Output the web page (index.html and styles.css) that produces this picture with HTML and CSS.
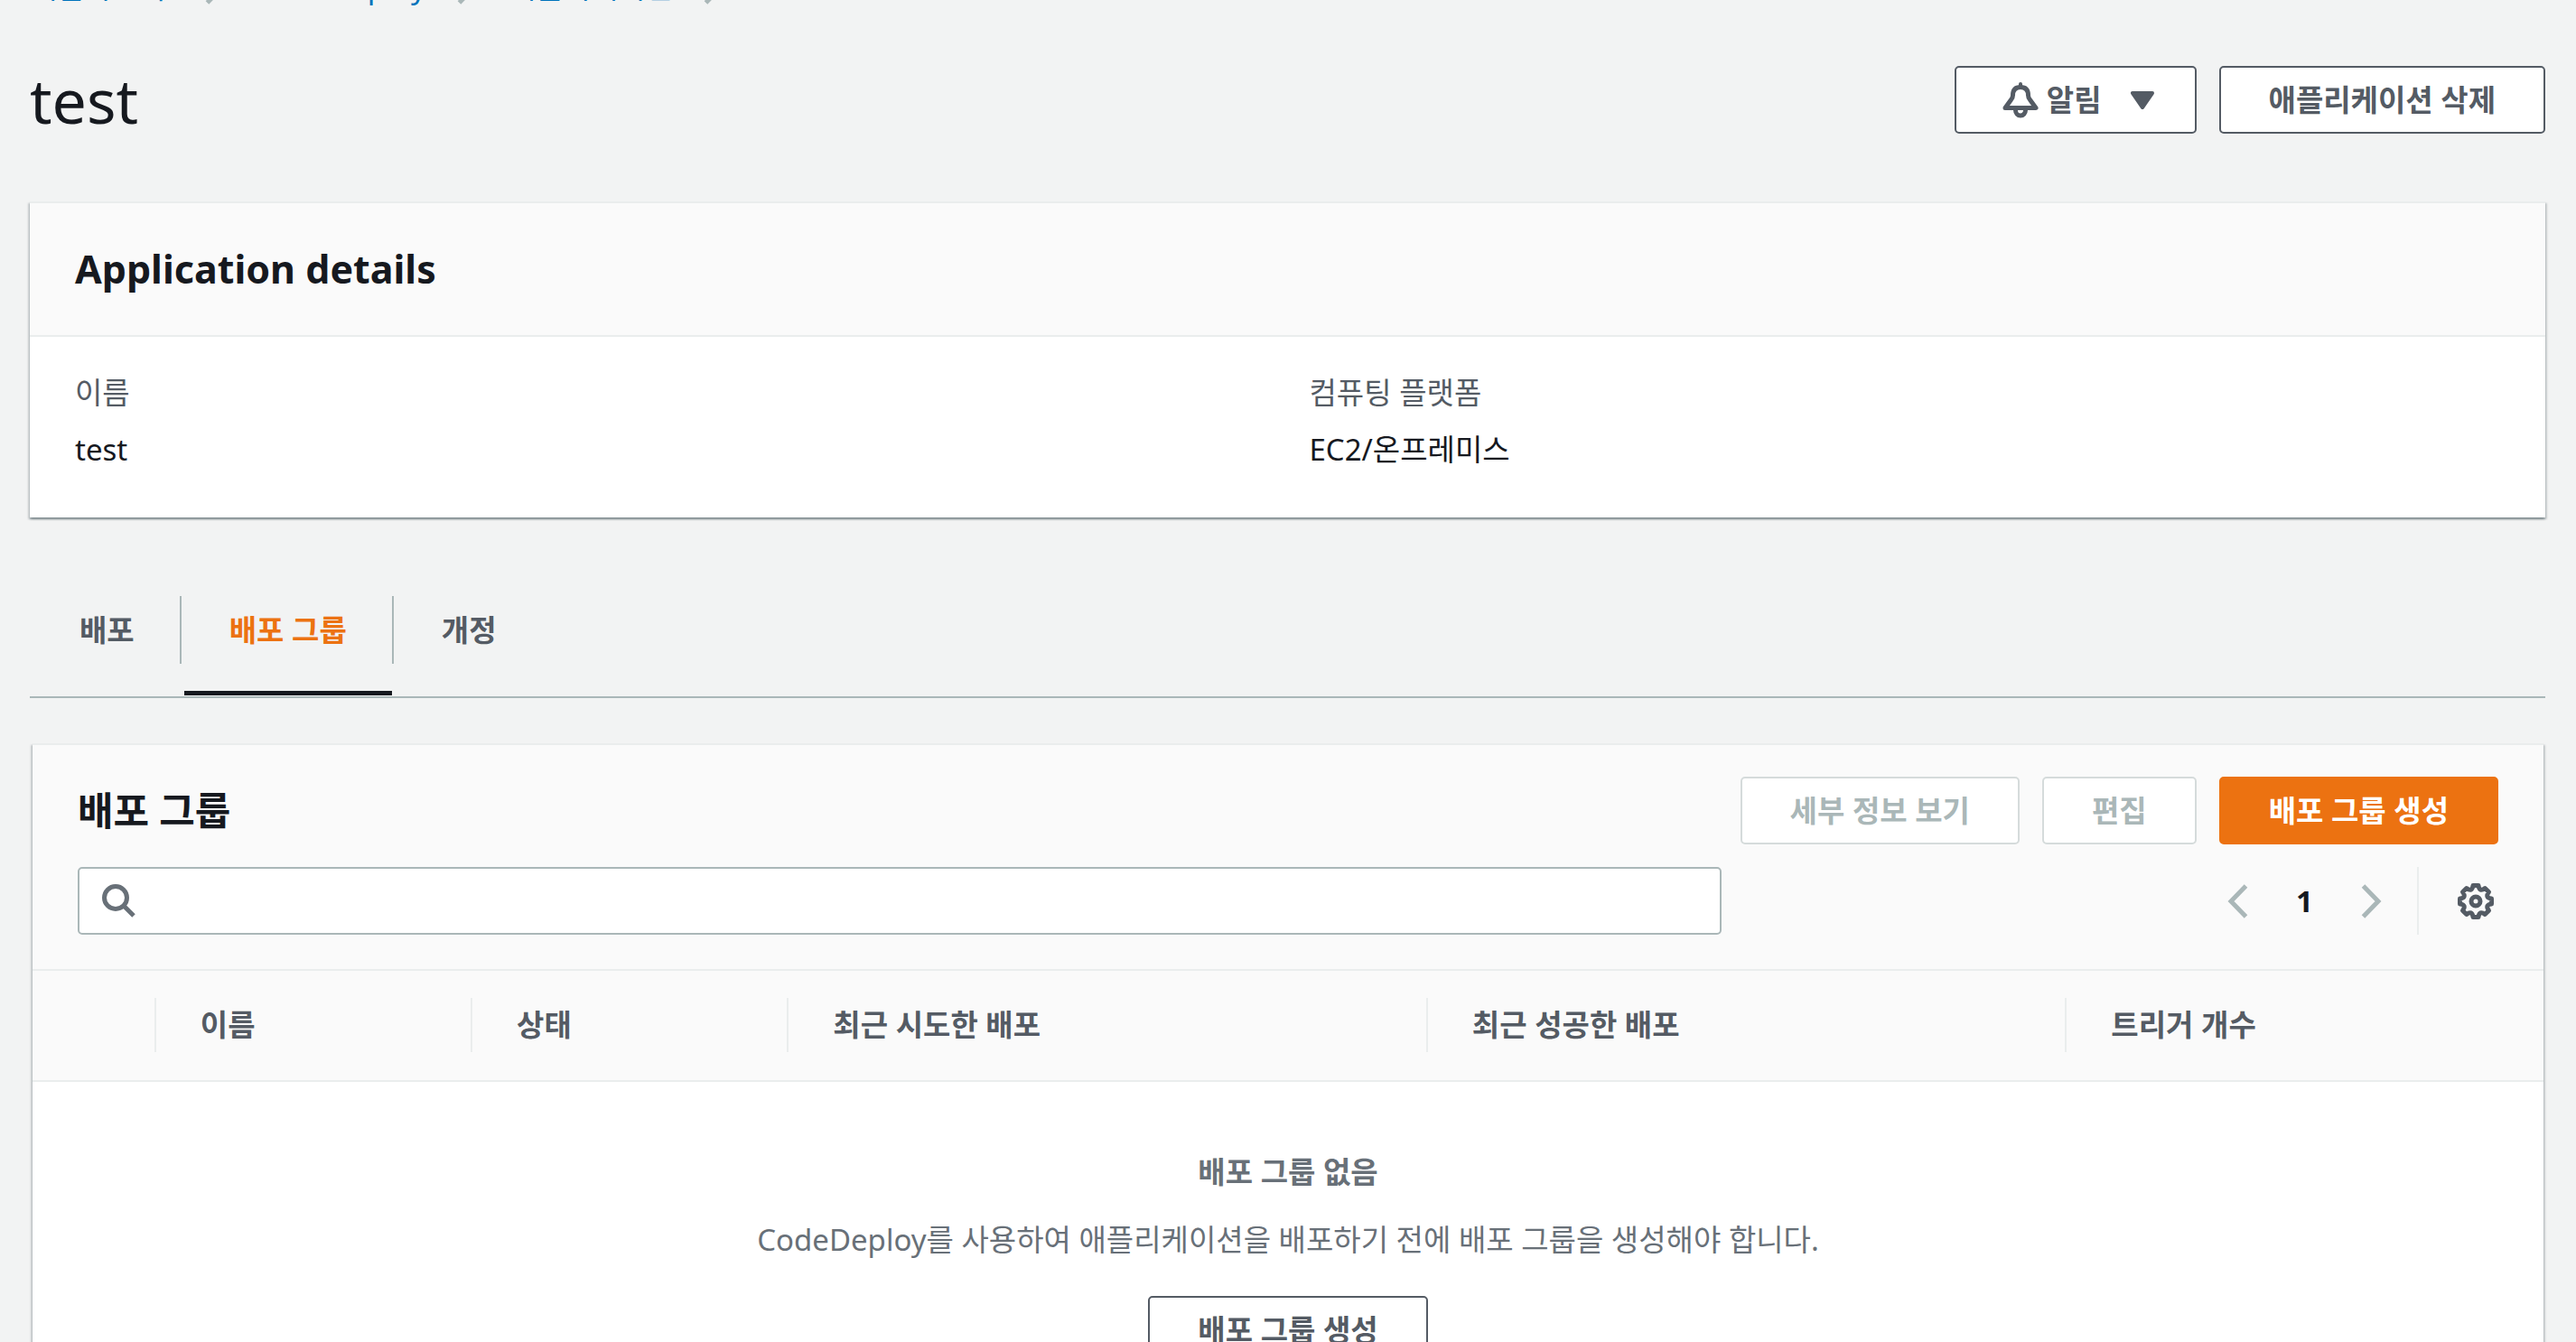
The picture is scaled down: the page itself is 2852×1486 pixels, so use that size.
FILE: index.html
```html
<!DOCTYPE html>
<html lang="ko">
<head>
    <meta charset="UTF-8">
    <meta name="viewport" content="width=device-width, initial-scale=1.0">
    <title>test - CodeDeploy</title>
    <link rel="stylesheet" href="styles.css">
</head>
<body>
    <div class="page">
        <nav class="breadcrumbs" aria-label="탐색 경로">
            <a href="#">개발자 도구</a>
            <svg class="chevron" viewBox="0 0 23 38"><path d="M2.5 2L19 19L2.5 36"/></svg>
            <a href="#">CodeDeploy</a>
            <svg class="chevron" viewBox="0 0 23 38"><path d="M2.5 2L19 19L2.5 36"/></svg>
            <a href="#">애플리케이션</a>
            <svg class="chevron" viewBox="0 0 23 38"><path d="M2.5 2L19 19L2.5 36"/></svg>
            <span>test</span>
        </nav>

        <header class="page-header">
            <h1>test</h1>
            <div class="actions">
                <button type="button" class="btn btn-dropdown">
                    <svg class="icon" viewBox="0 0 40 40">
                        <path d="M3 28.5L9.5 19.5Q11.5 17 11.5 14.5C11.5 8.5 14.5 5.5 20 5.5C25.5 5.5 28.5 8.5 28.5 14.5Q28.5 17 30.5 19.5L37 28.5Z"/>
                        <path d="M14.5 31A5.5 6 0 0 0 25.5 31"/>
                        <path d="M20 2V5" stroke-width="4" stroke-linecap="round"/>
                    </svg>
                    <span>알림</span>
                    <svg class="caret" viewBox="0 0 26 20"><path d="M2 2H24L13 18Z"/></svg>
                </button>
                <button type="button" class="btn">애플리케이션 삭제</button>
            </div>
        </header>

        <!-- Application details -->
        <section class="card">
            <div class="card-header">
                <h2>Application details</h2>
            </div>
            <dl class="details">
                <div>
                    <dt>이름</dt>
                    <dd>test</dd>
                </div>
                <div>
                    <dt>컴퓨팅 플랫폼</dt>
                    <dd>EC2/온프레미스</dd>
                </div>
            </dl>
        </section>

        <ul class="tabs">
            <li><a href="#">배포</a></li>
            <li class="active"><a href="#">배포 그룹</a></li>
            <li><a href="#">개정</a></li>
        </ul>

        <!-- Deployment groups -->
        <section class="card groups">
            <div class="toolbar">
                <div class="toolbar-row">
                    <h2>배포 그룹</h2>
                    <div class="actions">
                        <button type="button" class="btn" disabled>세부 정보 보기</button>
                        <button type="button" class="btn" disabled>편집</button>
                        <button type="button" class="btn btn-primary">배포 그룹 생성</button>
                    </div>
                </div>
                <div class="toolbar-row">
                    <label class="search">
                        <svg viewBox="0 0 37 37"><circle cx="15" cy="15" r="12.5"/><path d="M24 24L35 35"/></svg>
                        <input type="text" aria-label="배포 그룹 검색">
                    </label>
                    <div class="pagination">
                        <button type="button" aria-label="이전 페이지" disabled>
                            <svg class="chevron" viewBox="0 0 23 38"><path d="M20.5 2L4 19L20.5 36"/></svg>
                        </button>
                        <span class="page-number">1</span>
                        <button type="button" aria-label="다음 페이지" disabled>
                            <svg class="chevron" viewBox="0 0 23 38"><path d="M2.5 2L19 19L2.5 36"/></svg>
                        </button>
                        <button type="button" class="settings" aria-label="기본 설정">
                            <svg class="icon" viewBox="-20 -20 40 40">
                                <path d="M-3 -17.5H3Q4 -9.8 10.2 -14.5L14.5 -10.2Q9.8 -4 17.5 -3V3Q9.8 4 14.5 10.2L10.2 14.5Q4 9.8 3 17.5H-3Q-4 9.8 -10.2 14.5L-14.5 10.2Q-9.8 4 -17.5 3V-3Q-9.8 -4 -14.5 -10.2L-10.2 -14.5Q-4 -9.8 -3 -17.5Z"/>
                                <circle r="5"/>
                            </svg>
                        </button>
                    </div>
                </div>
            </div>

            <table>
                <colgroup>
                    <col class="col-select">
                    <col class="col-small">
                    <col class="col-small">
                    <col class="col-large">
                    <col class="col-large">
                    <col>
                </colgroup>
                <thead>
                    <tr>
                        <td></td>
                        <th scope="col"><div>이름</div></th>
                        <th scope="col"><div>상태</div></th>
                        <th scope="col"><div>최근 시도한 배포</div></th>
                        <th scope="col"><div>최근 성공한 배포</div></th>
                        <th scope="col"><div>트리거 개수</div></th>
                    </tr>
                </thead>
                <tbody>
                    <tr>
                        <td colspan="6" class="empty">
                            <h3>배포 그룹 없음</h3>
                            <p>CodeDeploy를 사용하여 애플리케이션을 배포하기 전에 배포 그룹을 생성해야 합니다.</p>
                            <button type="button" class="btn">배포 그룹 생성</button>
                        </td>
                    </tr>
                </tbody>
            </table>
        </section>
    </div>
</body>
</html>
```

FILE: styles.css
```css
* {
    box-sizing: border-box;
}

body {
    margin: 0;
    height: 100vh;
    overflow: hidden;
    background: #f2f3f3;
    color: #16191f;
    font-family: "Noto Sans", "Noto Sans CJK KR", sans-serif;
    font-size: 33px;
    line-height: 50px;
}

h1, h2, h3, p, dl, dd, ul {
    margin: 0;
    padding: 0;
}

h1 {
    font-size: 68px;
    line-height: 75px;
    font-weight: 400;
}

h2 {
    font-size: 43px;
    line-height: 50px;
    font-weight: 700;
}

a {
    color: #0073bb;
    text-decoration: none;
}

svg {
    display: block;
    flex-shrink: 0;
    fill: none;
    stroke: currentColor;
}

/* the console is scrolled down, so the breadcrumbs are nearly out of view */
.page {
    margin-top: -39px;
    padding: 0 34px 75px 33px;
}

.breadcrumbs {
    display: flex;
    align-items: center;
    gap: 34px;
    color: #687078;
}

.chevron {
    width: 23px;
    height: 38px;
    color: #aab7b8;
    stroke-width: 5;
}

.page-header {
    display: flex;
    justify-content: space-between;
    align-items: center;
    margin: 62px 0 75px;
}

.actions {
    display: flex;
    gap: 25px;
}

/* Buttons */
button {
    color: inherit;
    font-family: inherit;
    font-size: 33px;
    cursor: pointer;
}

.btn {
    height: 75px;
    padding: 0 53px;
    background: #fff;
    border: 2px solid #545b64;
    border-radius: 5px;
    color: #545b64;
    font-weight: 700;
    line-height: 50px;
    white-space: nowrap;
}

.btn:hover {
    background: #fafafa;
}

.btn:disabled {
    background: #fff;
    border-color: #d5dbdb;
    color: #aab7b8;
    cursor: default;
}

.btn-primary {
    background: #ec7211;
    border-color: #ec7211;
    color: #fff;
}

.btn-primary:hover {
    background: #eb5f07;
}

.btn-dropdown {
    display: flex;
    align-items: center;
    gap: 9px;
    padding: 0 45px 0 51px;
}

.icon {
    width: 40px;
    height: 40px;
    stroke-width: 5;
    stroke-linejoin: round;
}

.caret {
    width: 26px;
    height: 20px;
    margin-left: 23px;
    fill: currentColor;
    stroke-width: 4;
    stroke-linejoin: round;
}

/* Cards */
.card {
    background: #fff;
    border-top: 2px solid #eaeded;
    box-shadow: 0 2px 2px rgba(0,28,36,0.3), 2px 2px 2px rgba(0,28,36,0.15), -2px 2px 2px rgba(0,28,36,0.15);
}

.card-header {
    padding: 48px 50px;
    background: #fafafa;
    border-bottom: 2px solid #eaeded;
}

.details {
    display: grid;
    grid-template-columns: 1fr 1fr;
    gap: 48px;
    padding: 37px 50px 50px;
}

.details dt {
    margin-bottom: 13px;
    color: #545b64;
}

/* Tabs */
.tabs {
    display: flex;
    align-items: flex-start;
    margin: 87px 0 50px;
    padding: 0 2px 1px;
    border-bottom: 2px solid #aab7b8;
    list-style: none;
}

.tabs li {
    padding-left: 3px;
}

.tabs a {
    display: block;
    padding: 0 50px;
    border-right: 2px solid #aab7b8;
    color: #545b64;
    font-weight: 700;
    line-height: 75px;
}

.tabs li:last-child a {
    border-right: none;
}

.tabs .active a {
    color: #ec7211;
}

.tabs .active::after {
    content: "";
    display: block;
    height: 5px;
    margin: 30px 2px 0 0;
    background: #16191f;
}

/* Deployment groups */
.groups {
    margin: 0 2px 0 3px;
}

.toolbar {
    display: flex;
    flex-direction: column;
    gap: 25px;
    padding: 35px 50px 38px;
    background: #fafafa;
    border-bottom: 2px solid #eaeded;
}

.toolbar-row {
    display: flex;
    justify-content: space-between;
    align-items: center;
}

.search {
    display: flex;
    align-items: center;
    gap: 25px;
    width: 67.9%;
    height: 75px;
    padding: 0 25px;
    background: #fff;
    border: 2px solid #aab7b8;
    border-radius: 5px;
}

.search svg {
    width: 37px;
    height: 37px;
    color: #687078;
    stroke-width: 5;
}

.search input {
    flex: 1;
    height: 50px;
    padding: 0;
    background: none;
    border: none;
    outline: none;
    font: inherit;
}

.pagination {
    display: flex;
    align-items: center;
}

.pagination button {
    padding: 0;
    background: none;
    border: none;
}

.page-number {
    margin: 0 53px;
    font-weight: 700;
}

.pagination .settings {
    height: 75px;
    margin-left: 39px;
    padding: 0 5px 0 43px;
    border-left: 2px solid #eaeded;
    color: #545b64;
}

table {
    width: 100%;
    table-layout: fixed;
    border-collapse: separate;
    border-spacing: 0;
}

.col-select {
    width: 4.85%;
}

.col-small {
    width: 12.6%;
}

.col-large {
    width: 25.45%;
}

thead th,
thead td {
    padding: 30px 0 31px;
    background: #fafafa;
    border-bottom: 2px solid #eaeded;
    color: #545b64;
    text-align: left;
}

th div {
    padding-left: 49px;
    border-left: 2px solid #eaeded;
    line-height: 60px;
}

.empty {
    padding: 75px 50px;
    color: #687078;
    text-align: center;
}

.empty h3 {
    margin-bottom: 25px;
    font-size: 33px;
    font-weight: 700;
}

.empty p {
    margin-bottom: 37px;
}
```
